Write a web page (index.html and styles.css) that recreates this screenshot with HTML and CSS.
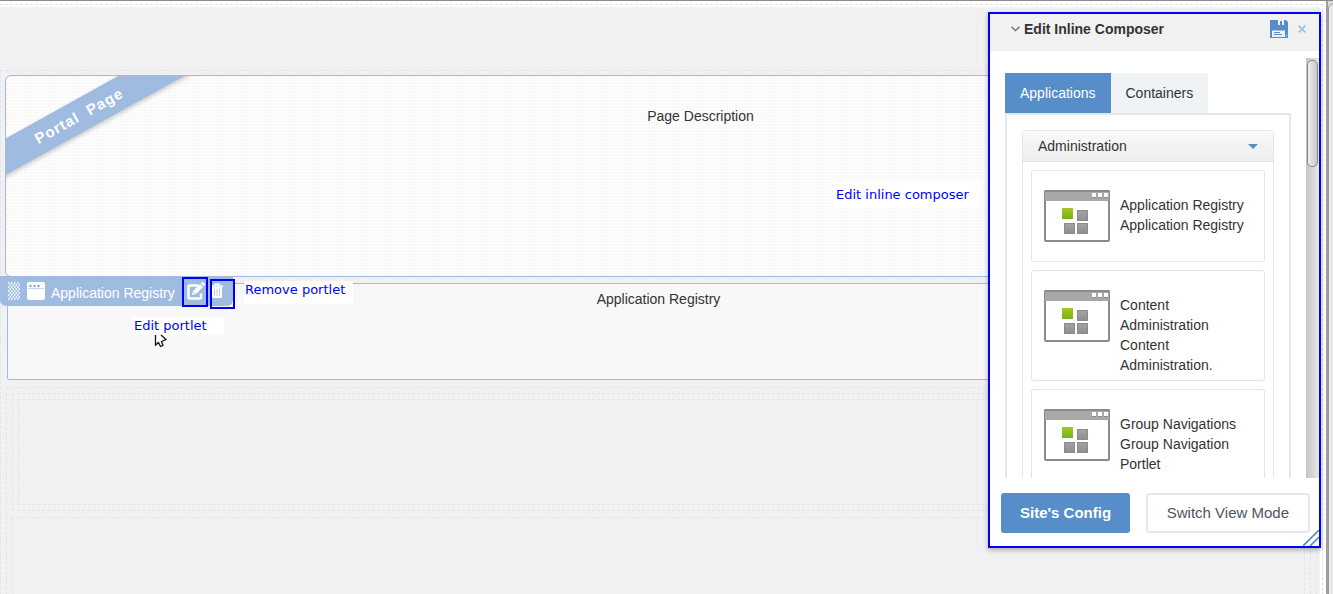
FILE: index.html
```html
<!DOCTYPE html>
<html lang="en">
<head>
<meta charset="utf-8">
<title>Edit Inline Composer</title>
<link rel="stylesheet" href="styles.css">
</head>
<body>
<svg class="defs" aria-hidden="true">
  <defs>
    <linearGradient id="green" x1="0" y1="0" x2="0" y2="1"><stop offset="0" stop-color="#a5c922"/><stop offset="1" stop-color="#74b01c"/></linearGradient>
    <linearGradient id="grey" x1="0" y1="0" x2="0" y2="1"><stop offset="0" stop-color="#a3a3a3"/><stop offset="1" stop-color="#8f8f8f"/></linearGradient>
    <symbol id="app" viewBox="0 0 66 52">
      <rect x="1" y="1" width="64" height="50" rx="1" fill="#fff" stroke="#8b8b8b" stroke-width="2"/>
      <path d="M1 1h64v10H1z" fill="#a8a8a8"/>
      <path d="M0 1.500Q0 0 1.500 0h63Q66 0 66 1.500V2H0z" fill="#8b8b8b"/>
      <path d="M48 4h4v4h-4zM54 4h4v4h-4zM60 4h4v4h-4z" fill="#8b8b8b"/>
      <path d="M48 3h4v4h-4zM54 3h4v4h-4zM60 3h4v4h-4z" fill="#fff"/>
      <rect x="18" y="18" width="11" height="11" fill="url(#green)"/>
      <g fill="url(#grey)" stroke="#8a8a8a">
        <rect x="33.500" y="20.500" width="10" height="10"/>
        <rect x="20.500" y="33.500" width="10" height="10"/>
        <rect x="33.500" y="33.500" width="10" height="10"/>
      </g>
    </symbol>
  </defs>
</svg>

<div class="window">
  <div class="page">
    <div class="page-outline">
      <main class="workspace">
        <div class="container outer">
          <section class="page-panel">
            <div class="ribbon">Portal  Page</div>
            <span class="speck"></span>
            <p class="page-description">Page Description</p>
          </section>
          <section class="portlet">
            <h2 class="portlet-title">Application Registry</h2>
            <div class="portlet-bar">
              <svg class="grip" viewBox="0 0 12 18" aria-hidden="true">
                <defs><pattern id="checks" width="3" height="4" patternUnits="userSpaceOnUse"><path d="M0 0h1.500v2H0zM1.500 2h1.500v2H1.500z" fill="#fff"/></pattern></defs>
                <rect width="12" height="18" fill="url(#checks)"/>
              </svg>
              <svg class="bar-window" viewBox="0 0 18 18" aria-hidden="true">
                <rect width="18" height="18" rx="2" fill="#fff"/>
                <path d="M1 6.500h16" stroke="#c4d7ee"/>
                <g fill="#7da4d4"><circle cx="3.500" cy="4" r="1.200"/><circle cx="7.500" cy="4" r="1.200"/><circle cx="11.500" cy="4" r="1.200"/></g>
              </svg>
              <span class="bar-name">Application Registry</span>
              <button class="bar-button" aria-label="Edit portlet">
                <svg viewBox="0 0 18 18" width="18" height="18">
                  <path d="M11 3.500H3Q1.500 3.500 1.500 5v10Q1.500 16.500 3 16.500h9.500Q14 16.500 14 15v-3.500" fill="none" stroke="#fff" stroke-width="2.400"/>
                  <path d="M5 13l1-4 7-7 3 3-7 7zM13.800 1.200l1-1Q15.500-.4 16.200.3l1.500 1.500q.6.700 0 1.400l-1 1z" fill="#fff"/>
                  <path d="M6.500 10l1.600 1.600" stroke="#9fbce0"/>
                </svg>
              </button>
              <button class="bar-button" aria-label="Remove portlet">
                <svg viewBox="0 0 12 16" width="12" height="16">
                  <path d="M0 3h12M4 3V1.200h4V3" fill="none" stroke="#fff" stroke-width="1.400"/>
                  <path d="M1 4h10v9.500Q11 15 9.500 15h-7Q1 15 1 13.500z" fill="#fff"/>
                  <path d="M3.500 6v7M6 6v7M8.500 6v7" stroke="#b9cfe9"/>
                </svg>
              </button>
            </div>
          </section>
          <div class="container inner">
            <div class="container row-box">
              <div class="container slot"></div>
            </div>
            <div class="container row-box last"></div>
          </div>
        </div>
      </main>
    </div>
  </div>
  <div class="page-scroll"><div class="page-thumb"></div></div>

  <span class="mark mark-edit"></span>
  <span class="mark mark-remove"></span>
  <span class="note note-composer">Edit inline composer</span>
  <span class="note note-remove">Remove portlet</span>
  <span class="note note-edit">Edit portlet</span>
  <svg class="cursor" viewBox="0 0 12 12" aria-hidden="true">
    <path d="M.5 0v10l3-2 2 3.500 2.500-1L6.500 7 11 5.500 5 0z" fill="#fff"/>
    <path d="M.5 0v10l3-2.500 2 4 2.500-1L6.500 6.500 11 4.500 6 0" fill="none" stroke="#111" stroke-width="1.300"/>
  </svg>

  <aside class="composer">
    <header class="composer-head">
      <button class="icon-button" aria-label="Collapse">
        <svg viewBox="0 0 9 6" width="9" height="6"><path d="M.5.700l4 4 4-4" fill="none" stroke="#5c6980" stroke-width="1.300"/></svg>
      </button>
      <h1 class="composer-title">Edit Inline Composer</h1>
      <button class="icon-button" aria-label="Save">
        <svg viewBox="0 0 18 18" width="18" height="18">
          <path d="M0 0h16l2 2v16H0z" fill="#578dc9"/>
          <path d="M5 0h9v6H5z" fill="#f1f1f1"/>
          <path d="M5 0h3v5H5zM10 1h2v4h-2zM5 5h9v1H5z" fill="#578dc9"/>
          <path d="M2 10.500h13V17H2z" fill="#f1f1f1"/>
          <path d="M4 12.500h6M4 14.500h8" stroke="#578dc9"/><path d="M16 15h1v1h-1z" fill="#fff"/>
        </svg>
      </button>
      <button class="icon-button close" aria-label="Close">
        <svg viewBox="0 0 8 8" width="8" height="8"><path d="M.7.700l6.600 6.600M7.300.700L.700 7.300" stroke="#9fbfe2" stroke-width="1.700"/></svg>
      </button>
    </header>
    <div class="composer-body">
      <div class="composer-content">
        <div class="tabs" role="tablist">
          <button class="tab active" role="tab" aria-selected="true">Applications</button>
          <button class="tab" role="tab" aria-selected="false">Containers</button>
        </div>
        <div class="tab-panel">
          <div class="accordion">
            <button class="accordion-head"><span>Administration</span><span class="caret"></span></button>
            <ul class="apps">
              <li class="app"><svg class="app-icon"><use href="#app"/></svg><div class="app-text"><p>Application Registry</p><p>Application Registry</p></div></li>
              <li class="app"><svg class="app-icon"><use href="#app"/></svg><div class="app-text"><p>Content Administration</p><p>Content Administration.</p></div></li>
              <li class="app"><svg class="app-icon"><use href="#app"/></svg><div class="app-text"><p>Group Navigations</p><p>Group Navigation Portlet</p></div></li>
            </ul>
          </div>
        </div>
      </div>
      <div class="composer-scroll"><div class="composer-thumb"></div></div>
    </div>
    <footer class="composer-foot">
      <button class="button primary">Site's Config</button>
      <button class="button">Switch View Mode</button>
    </footer>
    <svg class="resize" viewBox="0 0 16 16" aria-hidden="true"><path d="M0 16L16 0M7 16l9-9" stroke="#578dc9" stroke-width="1.600"/></svg>
  </aside>
</div>
</body>
</html>
```
FILE: styles.css
```css
* { box-sizing: border-box; }

body, h1, h2, p, ul { margin: 0; padding: 0; }

body {
  font: 14px/20px "Liberation Sans", Arial, sans-serif;
  color: #333;
}

button {
  font: inherit;
  color: inherit;
  border: 0;
  padding: 0;
  background: none;
}

svg { display: block; }

.defs { position: absolute; width: 0; height: 0; }

.window {
  position: relative;
  height: 100vh;
  overflow: hidden;
  border-top: 1px solid #8f8888;
  display: grid;
  grid-template-columns: 1fr 7px;
}

.page {
  padding: 3px 3px 0 0;
  overflow: hidden;
  background: #fff;
}

.page-outline {
  border: 1px dashed #dde5ec;
  border-width: 1px 1px 0 0;
  padding: 2px 2px 0 0;
}

.workspace {
  background: #f1f1f1;
  min-height: 100vh;
  padding: 63px 3px 0 0;
}

.container { border: 1px dashed #dfe5ea; }

.outer {
  min-height: 600px;
  padding: 4px 4px 0;
}

.page-panel {
  position: relative;
  height: 202px;
  overflow: hidden;
  border: 1px solid #9fbce0;
  border-radius: 6px;
  background: radial-gradient(circle at 1px 1px, #f8f8f8 1px, #fefefe 1px) 0 0 / 3px 3px;
}

.ribbon {
  position: absolute;
  left: -57px;
  top: 24px;
  width: 260px;
  height: 32px;
  transform: rotate(-29deg);
  background: #9fbce0;
  box-shadow: 0 2px 4px rgba(0, 0, 0, .2);
  color: #fff;
  font-size: 15px;
  font-weight: bold;
  line-height: 32px;
  letter-spacing: 1px;
  text-align: center;
  white-space: pre;
}

.speck {
  position: absolute;
  left: 402px;
  top: -1px;
  width: 1px;
  height: 1px;
  background: #222;
}

.page-description {
  padding: 30px 0 0 84px;
  text-align: center;
}

.portlet {
  position: relative;
  height: 97px;
  margin: 6px 2px 0;
  padding-top: 5px;
  border: 1px solid #9fbce0;
  border-radius: 2px;
  background: #f8f8f8;
}

.portlet-title {
  font-size: 14px;
  font-weight: normal;
  text-align: center;
}

.portlet-bar {
  position: absolute;
  left: -8px;
  top: -8px;
  height: 30px;
  padding: 0 10px 0 8px;
  display: flex;
  align-items: center;
  border-radius: 0 0 6px 6px;
  background: #9fbce0;
  color: #fff;
}

.grip { width: 12px; height: 18px; margin-right: 7px; opacity: .8; }
.bar-window { width: 18px; height: 18px; margin-right: 6px; }
.bar-name { padding-top: 4px; margin-right: 12px; }
.bar-button { margin-right: 6px; }
.bar-button:last-child { margin-right: 0; }

.inner { margin: 7px 1px 0; padding: 5px 5px 0; min-height: 300px; }
.row-box { padding: 5px; margin-bottom: 6px; }
.slot { height: 106px; }
.last { min-height: 200px; }

.page-scroll {
  overflow: hidden;
  border-left: 2px solid #a09e9e;
  background: #dcdcdc;
  padding-top: 2px;
}

.page-thumb {
  width: 14px;
  height: 640px;
  border: 1px solid #999;
  border-radius: 6px;
  background: linear-gradient(90deg, #efefef, #ccc);
}

.mark {
  position: absolute;
  height: 30px;
  border: 2px solid #00f;
}

.mark-edit { left: 182px; top: 276px; width: 26px; }
.mark-remove { left: 210px; top: 278px; width: 25px; }

.note {
  position: absolute;
  background: #fff;
  color: #00f;
  font: 13px/18px "DejaVu Sans", sans-serif;
  white-space: nowrap;
}

.note-composer { left: 833px; top: 181px; padding: 4px 12px 4px 3px; }
.note-remove { left: 244px; top: 280px; padding: 0 8px 5px 1px; }
.note-edit { left: 133px; top: 316px; padding: 0 17px 0 1px; }

.cursor {
  position: absolute;
  left: 155px;
  top: 334px;
  width: 12px;
  height: 12px;
  overflow: visible;
}

.composer {
  position: absolute;
  top: 11px;
  right: 12px;
  width: 333px;
  height: 536px;
  display: flex;
  flex-direction: column;
  border: 2px solid #00f;
  background: #fff;
  box-shadow: 0 2px 5px rgba(0, 0, 0, .3);
}

.composer-head {
  height: 37px;
  padding: 0 13px 7px 21px;
  display: flex;
  align-items: center;
  background: #f1f1f1;
}

.composer-title {
  flex: 1;
  margin-left: 4px;
  font-size: 14px;
  line-height: 20px;
}

.close { margin-left: 10px; }

.composer-body {
  flex: 1;
  min-height: 0;
  margin-top: 7px;
  display: flex;
  justify-content: space-between;
  overflow: hidden;
}

.composer-content { flex: 1; padding: 15px 15px 0; }

.tabs { display: flex; }

.tab {
  height: 40px;
  padding: 0 15px;
  background: #eff3f6;
}

.tab.active { background: #578dc9; color: #fff; }

.tab-panel {
  padding: 15px;
  border: 2px solid #e2e8ed;
}

.accordion {
  border: 1px solid #e1e8ee;
  border-radius: 4px 4px 0 0;
}

.accordion-head {
  width: 100%;
  height: 31px;
  padding: 0 15px;
  display: flex;
  align-items: center;
  justify-content: space-between;
  border-bottom: 1px solid #dfe5ea;
  background: linear-gradient(#f9f9f9, #ededed);
}

.caret {
  border: 5px solid transparent;
  border-top-color: #578dc9;
  border-bottom: 0;
}

.apps {
  padding: 8px;
  display: grid;
  gap: 8px;
  list-style: none;
}

.app {
  min-height: 92px;
  padding: 19px 12px 5px;
  display: flex;
  gap: 10px;
  border: 1px solid #e2e4e6;
  border-radius: 3px;
}

.app-icon { width: 66px; height: 52px; flex: none; }
.app-text { padding-top: 5px; }

.composer-scroll {
  width: 13px;
  padding: 2px 1px;
  background: linear-gradient(90deg, #c4c4c4, #e9e9e9);
}

.composer-thumb {
  height: 107px;
  border: 1px solid #888;
  border-radius: 5px;
  background: linear-gradient(90deg, #eee, #c6c6c6);
}

.composer-foot {
  padding: 15px 9px 13px 11px;
  display: flex;
  justify-content: space-between;
}

.button {
  height: 40px;
  padding: 0 19px;
  border: 2px solid #e2e8ed;
  border-radius: 3px;
  background: #fff;
  color: #4d5466;
  font-size: 15px;
}

.primary {
  padding: 0 17px;
  border-color: #578dc9;
  background: #578dc9;
  color: #fff;
  font-weight: bold;
}

.resize {
  position: absolute;
  right: 0;
  bottom: 0;
  width: 16px;
  height: 16px;
}
```
